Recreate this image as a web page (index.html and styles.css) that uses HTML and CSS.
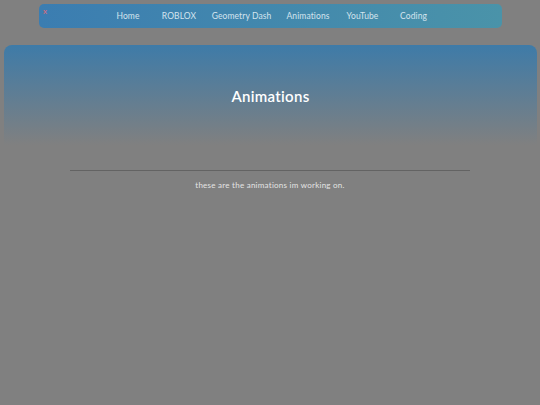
FILE: index.html
```html
<!DOCTYPE html>
<html>
<head>
<meta charset="utf-8">
<link rel="stylesheet" href="styles.css">
</head>
<body>
<nav class="nav">
  <span class="close">x</span>
  <ul class="links">
    <li><span>Home</span></li>
    <li><span>ROBLOX</span></li>
    <li><span>Geometry Dash</span></li>
    <li><span>Animations</span></li>
    <li><span>YouTube</span></li>
    <li><span>Coding</span></li>
  </ul>
</nav>
<header class="hero">
  <h1 class="title">Animations</h1>
</header>
<main class="content">
  <hr class="rule">
  <p class="desc">these are the animations im working on.</p>
</main>
</body>
</html>
```
FILE: styles.css
```css
html, body {
  margin: 0;
  padding: 0;
  background: #808080;
  font-family: "Lato", "Open Sans", sans-serif;
}
body {
  padding: 4px 4px 0 4px;
}
.nav {
  position: relative;
  margin: 0 34px 0 35px;
  height: 24px;
  border-radius: 5px;
  background: linear-gradient(to right, #3b7db1, #4a93a9);
  display: flex;
  align-items: center;
}
.close {
  position: absolute;
  left: 4px;
  top: 2px;
  color: #e06a78;
  font-size: 8px;
  line-height: 10px;
}
.links {
  list-style: none;
  margin: 0;
  padding: 0 0 0 78px;
  display: flex;
}
.links li {
  display: flex;
  justify-content: center;
  white-space: nowrap;
  color: #d4e4ee;
  font-size: 8.5px;
  font-weight: 400;
  letter-spacing: 0.1px;
  line-height: 24px;
}
.links li:nth-child(1) { width: 22px; }
.links li:nth-child(2) { margin-left: 25px; width: 30px; }
.links li:nth-child(3) { margin-left: 19px; width: 57px; }
.links li:nth-child(4) { margin-left: 18px; width: 40px; }
.links li:nth-child(5) { margin-left: 19px; width: 31px; }
.links li:nth-child(6) { margin-left: 23px; width: 25px; }
.hero {
  margin-top: 17px;
  margin-right: -1px;
  height: 100px;
  border-radius: 8px 8px 0 0;
  background: linear-gradient(to bottom, #3e7ba8, #808080);
  display: flex;
  align-items: center;
  justify-content: center;
}
.title {
  margin: 0;
  color: #ffffff;
  font-size: 15px;
  font-weight: 600;
  letter-spacing: 0.3px;
  padding-top: 1px;
}
.content {
  display: flex;
  flex-direction: column;
  align-items: center;
}
.rule {
  width: 400px;
  margin: 25px 0 0 0;
  border: 0;
  border-top: 1px solid #636363;
  height: 0;
}
.desc {
  margin: 9px 0 0 0;
  color: #e4e4e4;
  font-size: 8px;
  letter-spacing: 0.25px;
}
```
